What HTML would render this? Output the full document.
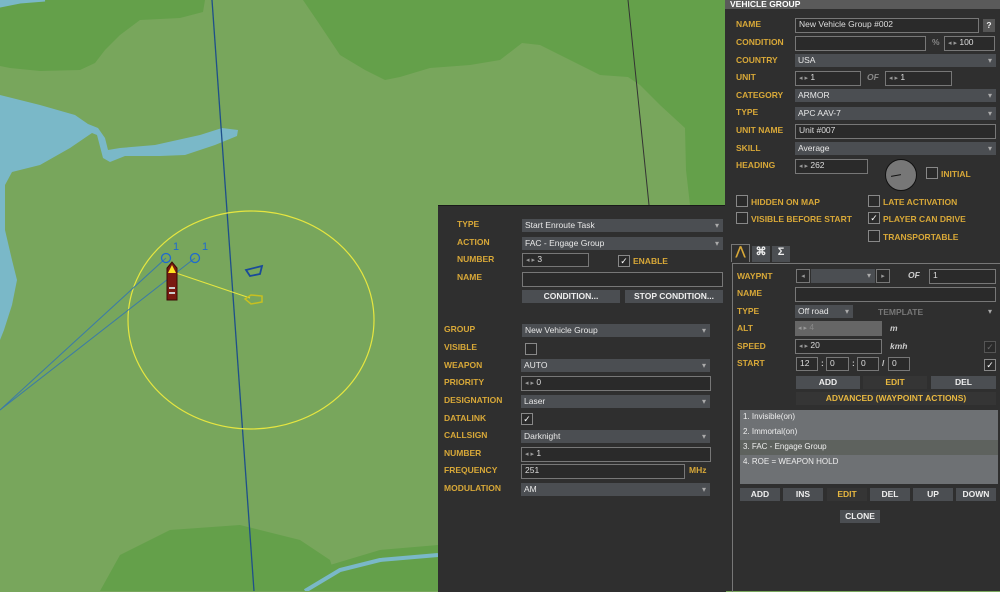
<!DOCTYPE html><html><head><style>
body{margin:0;width:1000px;height:591px;overflow:hidden;position:relative;font-family:"Liberation Sans",sans-serif;background:#78a65c}
.p{position:absolute;background:#2f2f2f}
.l{position:absolute;color:#d8a838;font-size:8.5px;font-weight:bold;white-space:nowrap}
.i{position:absolute;box-sizing:border-box;border:1px solid #777;background:#2a2a2a;color:#ddd;font-size:8.5px;line-height:11px;padding-left:3px;white-space:nowrap;overflow:hidden}
.d{position:absolute;box-sizing:border-box;background:#4b4e52;color:#e8e8e8;font-size:8.5px;line-height:13px;padding-left:3px;white-space:nowrap}
.d:after{content:"▾";position:absolute;right:4px;top:0;font-size:8px;color:#aaa}
.d.n:after{content:""}
.b{position:absolute;box-sizing:border-box;background:#4b4e52;color:#eee;font-size:8.5px;font-weight:bold;text-align:center;line-height:13px}
.c{position:absolute;box-sizing:border-box;width:12px;height:12px;border:1px solid #888;background:#2a2a2a;color:#fff;font-size:9px;line-height:10px;text-align:center}
.s{color:#999;font-size:7px}
</style></head><body>
<svg style="position:absolute;left:0;top:0" width="1000" height="591">
<path d="M0 0H205L203 12 180 18 140 20 120 35 105 50 95 63 80 70 40 71 10 68 0 66Z" fill="#64a04a"/>
<path d="M0 6L20 2 45 0H0Z" fill="#7ab8c8" stroke="#7ab8c8" stroke-width="3"/>
<path d="M303 0H730V205H690L686 170 685 128 660 105 640 85 628 77 600 75 570 60 540 45 522 43 500 60 470 65 430 68 400 77 385 80 365 70 340 55 320 25Z" fill="#64a04a"/>
<path d="M0 95L40 105 75 115 88 124 98 128 105 138 108 150 120 148 155 145 200 135 222 128 238 130 237 136 215 145 185 155 160 156 125 156 110 162 103 158 97 135 92 133 70 148 40 165 12 172 5 185 5 230 12 260 17 280 12 305 4 330 0 340Z" fill="#7ab8c8"/>
<path d="M100 591L120 555 170 530 240 525 300 540 330 560 340 591Z" fill="#64a04a"/>
<path d="M250 591L330 565 380 550 438 545V591Z" fill="#64a04a"/>
<path d="M305 591L340 570 380 560 438 555" stroke="#7ab8c8" stroke-width="4" fill="none"/>
<line x1="212" y1="0" x2="254" y2="591" stroke="#1e4f8a" stroke-width="1.3"/>
<line x1="628" y1="0" x2="649" y2="205" stroke="#333" stroke-width="1"/>
<ellipse cx="251" cy="320" rx="123" ry="109" fill="none" stroke="#e6e640" stroke-width="1.2"/>
<line x1="0" y1="410" x2="166" y2="258" stroke="#3a7aa8"/>
<line x1="0" y1="410" x2="195" y2="258" stroke="#3a7aa8"/>
<circle cx="166" cy="258" r="4.5" fill="none" stroke="#1e6ad0" stroke-width="1.3"/>
<circle cx="195" cy="258" r="4.5" fill="none" stroke="#1e6ad0" stroke-width="1.3"/>
<text x="173" y="250" fill="#1e6ad0" font-size="11" font-family="Liberation Sans">1</text>
<text x="202" y="250" fill="#1e6ad0" font-size="11" font-family="Liberation Sans">1</text>
<line x1="176" y1="273" x2="250" y2="298" stroke="#e6e640"/>
<path d="M167 300V268L172 262 177 268V300Z" fill="#7a1a10" stroke="#3a0a05"/>
<path d="M168 273L172 265 176 273Z" fill="#ffe020"/>
<rect x="169" y="287" width="6" height="2" fill="#ccc"/><rect x="169" y="292" width="6" height="2" fill="#ccc"/>
<path d="M246 270L262 266 260 274 250 276Z" fill="none" stroke="#1a4a9a" stroke-width="1.8"/>
<path d="M245 299L251 295 262 296 262 302 251 304Z" fill="none" stroke="#c8c020" stroke-width="1.5"/>
</svg>
<div class="p" style="left:438px;top:205px;width:288px;height:386px;border-top:1px solid #1a1a1a"></div>
<div class="l" style="left:457px;top:219px">TYPE</div><div class="d" style="left:522px;top:219px;width:201px">Start Enroute Task</div>
<div class="l" style="left:457px;top:237px">ACTION</div><div class="d" style="left:522px;top:237px;width:201px">FAC - Engage Group</div>
<div class="l" style="left:457px;top:254px">NUMBER</div><div class="i" style="left:522px;top:253px;width:67px;height:14px"><span class="s">◂ ▸</span> 3</div>
<div class="c" style="left:618px;top:255px">✓</div><div class="l" style="left:633px;top:256px">ENABLE</div>
<div class="l" style="left:457px;top:272px">NAME</div><div class="i" style="left:522px;top:272px;width:201px;height:15px"></div>
<div class="b" style="left:522px;top:290px;width:98px">CONDITION...</div><div class="b" style="left:625px;top:290px;width:98px">STOP CONDITION...</div>
<div class="l" style="left:444px;top:324px">GROUP</div><div class="d" style="left:522px;top:324px;width:188px">New Vehicle Group</div>
<div class="l" style="left:444px;top:342px">VISIBLE</div><div class="c" style="left:525px;top:343px"></div>
<div class="l" style="left:444px;top:360px">WEAPON</div><div class="d" style="left:521px;top:359px;width:189px">AUTO</div>
<div class="l" style="left:444px;top:377px">PRIORITY</div><div class="i" style="left:521px;top:376px;width:190px;height:15px"><span class="s">◂ ▸</span> 0</div>
<div class="l" style="left:444px;top:395px">DESIGNATION</div><div class="d" style="left:521px;top:395px;width:189px">Laser</div>
<div class="l" style="left:444px;top:413px">DATALINK</div><div class="c" style="left:521px;top:413px">✓</div>
<div class="l" style="left:444px;top:430px">CALLSIGN</div><div class="d" style="left:521px;top:430px;width:189px">Darknight</div>
<div class="l" style="left:444px;top:448px">NUMBER</div><div class="i" style="left:521px;top:447px;width:190px;height:15px"><span class="s">◂ ▸</span> 1</div>
<div class="l" style="left:444px;top:465px">FREQUENCY</div><div class="i" style="left:521px;top:464px;width:164px;height:15px">251</div><div class="l" style="left:689px;top:465px">MHz</div>
<div class="l" style="left:444px;top:483px">MODULATION</div><div class="d" style="left:521px;top:483px;width:189px">AM</div>
<div class="p" style="left:725px;top:0;width:275px;height:591px"></div>
<div style="position:absolute;left:725px;top:0;width:275px;height:9px;background:#5a5a5a;color:#fff;font-size:8.5px;font-weight:bold;line-height:8px;padding-left:5px">VEHICLE GROUP</div>
<div class="l" style="left:736px;top:19px">NAME</div><div class="i" style="left:795px;top:18px;width:184px;height:15px">New Vehicle Group #002</div>
<div class="b" style="left:983px;top:19px;width:12px;background:#555">?</div>
<div class="l" style="left:736px;top:37px">CONDITION</div><div class="i" style="left:795px;top:36px;width:131px;height:15px"></div>
<div class="l" style="left:932px;top:37px;color:#888">%</div><div class="i" style="left:944px;top:36px;width:51px;height:15px"><span class="s">◂ ▸</span> 100</div>
<div class="l" style="left:736px;top:55px">COUNTRY</div><div class="d" style="left:795px;top:54px;width:201px">USA</div>
<div class="l" style="left:736px;top:72px">UNIT</div><div class="i" style="left:795px;top:71px;width:66px;height:15px"><span class="s">◂ ▸</span> 1</div>
<div class="l" style="left:867px;top:72px;color:#888;font-style:italic">OF</div><div class="i" style="left:885px;top:71px;width:67px;height:15px"><span class="s">◂ ▸</span> 1</div>
<div class="l" style="left:736px;top:90px">CATEGORY</div><div class="d" style="left:795px;top:89px;width:201px">ARMOR</div>
<div class="l" style="left:736px;top:107px">TYPE</div><div class="d" style="left:795px;top:107px;width:201px">APC AAV-7</div>
<div class="l" style="left:736px;top:125px">UNIT NAME</div><div class="i" style="left:795px;top:124px;width:201px;height:15px">Unit #007</div>
<div class="l" style="left:736px;top:143px">SKILL</div><div class="d" style="left:795px;top:142px;width:201px">Average</div>
<div class="l" style="left:736px;top:160px">HEADING</div><div class="i" style="left:795px;top:159px;width:73px;height:15px"><span class="s">◂ ▸</span> 262</div>
<div style="position:absolute;left:885px;top:159px;width:30px;height:30px;border-radius:50%;background:#777;border:1px solid #111"></div>
<div style="position:absolute;left:891px;top:175px;width:10px;height:1px;background:#111;transform:rotate(-10deg)"></div>
<div class="c" style="left:926px;top:167px"></div><div class="l" style="left:941px;top:169px">INITIAL</div>
<div class="c" style="left:736px;top:195px"></div><div class="l" style="left:751px;top:197px">HIDDEN ON MAP</div>
<div class="c" style="left:736px;top:212px"></div><div class="l" style="left:751px;top:214px">VISIBLE BEFORE START</div>
<div class="c" style="left:868px;top:195px"></div><div class="l" style="left:883px;top:197px">LATE ACTIVATION</div>
<div class="c" style="left:868px;top:212px">✓</div><div class="l" style="left:883px;top:214px">PLAYER CAN DRIVE</div>
<div class="c" style="left:868px;top:230px"></div><div class="l" style="left:883px;top:232px">TRANSPORTABLE</div>
<div class="b" style="left:731px;top:244px;width:19px;height:18px;background:#2f2f2f;border:1px solid #777;border-bottom:none;color:#d8a838;font-size:12px">⋀</div>
<div class="b" style="left:752px;top:246px;width:18px;height:16px;font-size:11px">⌘</div>
<div class="b" style="left:772px;top:246px;width:18px;height:16px;font-size:11px">Σ</div>
<div style="position:absolute;left:732px;top:263px;width:268px;height:328px;border-left:1px solid #777;border-top:1px solid #777"></div>
<div class="l" style="left:737px;top:271px">WAYPNT</div>
<div class="i" style="left:796px;top:269px;width:14px;height:14px;padding:0;text-align:center"><span class="s">◂</span></div>
<div class="d" style="left:811px;top:269px;width:64px;height:14px"></div>
<div class="i" style="left:876px;top:269px;width:14px;height:14px;padding:0;text-align:center"><span class="s">▸</span></div>
<div class="l" style="left:908px;top:270px;color:#ccc;font-style:italic">OF</div><div class="i" style="left:929px;top:269px;width:67px;height:15px">1</div>
<div class="l" style="left:737px;top:288px">NAME</div><div class="i" style="left:795px;top:287px;width:201px;height:15px"></div>
<div class="l" style="left:737px;top:306px">TYPE</div><div class="d" style="left:795px;top:305px;width:58px">Off road</div>
<div class="l" style="left:878px;top:307px;color:#777">TEMPLATE</div><div class="d" style="left:925px;top:305px;width:71px;background:#555"></div>
<div class="l" style="left:737px;top:323px">ALT</div><div class="d n" style="left:795px;top:321px;width:87px;height:15px;background:#666;color:#888"><span class="s">◂ ▸</span> 4</div>
<div class="l" style="left:890px;top:323px;color:#ccc;font-style:italic">m</div>
<div class="l" style="left:737px;top:341px">SPEED</div><div class="i" style="left:795px;top:339px;width:87px;height:15px"><span class="s">◂ ▸</span> 20</div>
<div class="l" style="left:890px;top:341px;color:#ccc;font-style:italic">kmh</div><div class="c" style="left:984px;top:341px;color:#666;border-color:#555">✓</div>
<div class="l" style="left:737px;top:358px">START</div>
<div class="i" style="left:796px;top:357px;width:22px;height:14px">12</div><div class="l" style="left:821px;top:358px;color:#ccc">:</div>
<div class="i" style="left:826px;top:357px;width:23px;height:14px">0</div><div class="l" style="left:852px;top:358px;color:#ccc">:</div>
<div class="i" style="left:857px;top:357px;width:22px;height:14px">0</div><div class="l" style="left:882px;top:358px;color:#ccc">/</div>
<div class="i" style="left:888px;top:357px;width:22px;height:14px">0</div>
<div class="c" style="left:984px;top:359px">✓</div>
<div class="b" style="left:796px;top:376px;width:64px">ADD</div><div class="b" style="left:863px;top:376px;width:64px;background:#353535;color:#e8b840">EDIT</div><div class="b" style="left:931px;top:376px;width:65px">DEL</div>
<div class="b" style="left:796px;top:392px;width:200px;background:#353535;color:#e8b840">ADVANCED (WAYPOINT ACTIONS)</div>
<div style="position:absolute;left:740px;top:410px;width:258px;height:74px;background:#6e7174;color:#eee;font-size:8px">
<div style="padding:2px 3px;height:11px">1. Invisible(on)</div><div style="padding:2px 3px;height:11px">2. Immortal(on)</div><div style="padding:2px 3px;height:11px;background:#5e625e">3. FAC - Engage Group</div><div style="padding:2px 3px;height:11px">4. ROE = WEAPON HOLD</div></div>
<div class="b" style="left:740px;top:488px;width:40px">ADD</div><div class="b" style="left:783px;top:488px;width:40px">INS</div><div class="b" style="left:827px;top:488px;width:40px;background:#353535;color:#e8b840">EDIT</div><div class="b" style="left:870px;top:488px;width:40px">DEL</div><div class="b" style="left:913px;top:488px;width:40px">UP</div><div class="b" style="left:956px;top:488px;width:40px">DOWN</div>
<div class="b" style="left:840px;top:510px;width:40px">CLONE</div>
</body></html>
